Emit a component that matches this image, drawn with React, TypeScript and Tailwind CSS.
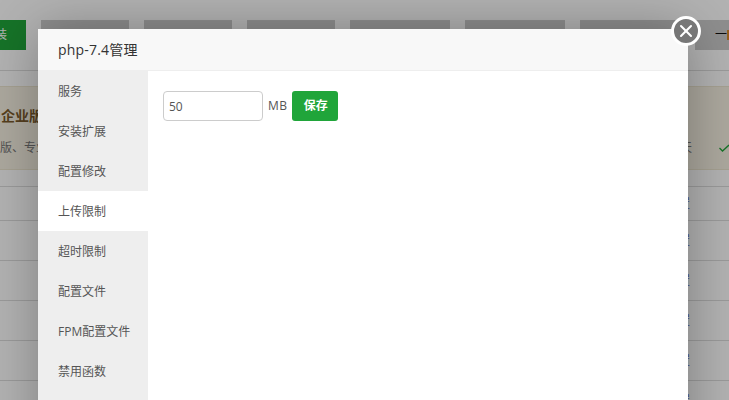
import { X } from "lucide-react";

const font = { fontFamily: '"Open Sans", "Noto Sans CJK SC", sans-serif' };

const topButtons = ["w-[88px]", "w-[88px]", "w-[88px]", "w-[100px]", "w-[100px]", "w-[100px]"];
const menu = ["服务", "安装扩展", "配置修改", "上传限制", "超时限制", "配置文件", "FPM配置文件", "禁用函数"];

function BackgroundPage() {
  return (
    <div className="h-full bg-white text-[#666]">
      <div className="flex h-[71px] border-b border-[#ddd] pt-5">
        <div className="flex h-[30px] w-[26px] shrink-0 justify-end overflow-hidden bg-[#20a53a] pr-[19px] text-xs leading-[30px] text-white">
          <span className="shrink-0">装</span>
        </div>
        <div className="ml-[15px] flex gap-[15px]">
          {topButtons.map((w, i) => (
            <div key={i} className={`${w} h-[30px] bg-[#ccc]`} />
          ))}
        </div>
        <div className="ml-[15px] flex h-[30px] flex-1 items-center bg-[#ccc] pl-5 text-[#111]">
          <span className="text-xs">一</span>
          <span className="h-[10px] w-[2px] bg-[#d98a2b]" />
        </div>
      </div>
      <div className="mt-[15px] flex h-[84px] items-end justify-between border-y border-[#ece5d0] bg-[#f6f1e2] pb-[13px] pl-px">
        <div>
          <div className="mb-[14px] text-sm font-bold text-[#7a5a2c]">企业版</div>
          <div className="-ml-px text-xs text-[#777]">版、专业版</div>
        </div>
        <div className="flex items-center gap-[27px] text-xs text-[#777]">
          <span>天</span>
          <svg width="10" height="8" viewBox="0 0 10 8" fill="none" stroke="#20a53a" strokeWidth="1.3">
            <path d="M0.5 4 L3.5 7 L10 1" />
          </svg>
        </div>
      </div>
      <div className="mt-4 border-t border-[#ddd]">
        {[34, 40, 40, 40, 40, 40].map((h, i) => (
          <div key={i} style={{ height: h }} className="flex items-center justify-end border-b border-[#ddd] pr-[39px] text-xs text-[#5a6bc0]">
            设置
          </div>
        ))}
      </div>
    </div>
  );
}

export default function App() {
  return (
    <div className="relative h-[400px] w-[729px] overflow-hidden" style={font}>
      <BackgroundPage />
      <div className="absolute inset-0 bg-black/30" />
      <div className="absolute left-[38px] top-[29px] flex h-[500px] w-[650px] flex-col bg-white shadow-[1px_1px_50px_rgba(0,0,0,0.3)]">
        <div className="h-[42px] border-b border-[#eee] bg-[#f8f8f8] pl-5 text-sm leading-[41px] tracking-[0.2px] text-[#333]">php-7.4管理</div>
        <div className="flex flex-1">
          <div className="w-[110px] bg-[#eee]">
            {menu.map((m) => (
              <div
                key={m}
                className={`h-10 pl-5 text-xs leading-[42px] text-[#555] ${m === "上传限制" ? "bg-white" : ""}`}
              >
                {m}
              </div>
            ))}
          </div>
          <div className="flex items-center self-start pl-[15px] pt-5">
            <input
              readOnly
              value="50"
              className="h-[30px] w-[100px] rounded-sm border border-[#ccc] px-[5px] text-xs text-[#555] outline-none"
            />
            <span className="ml-[5px] text-xs tracking-[0.4px] text-[#555]">MB</span>
            <button className="ml-[5px] h-[30px] w-[46px] rounded-[3px] bg-[#20a53a] pl-px text-xs font-bold text-white">保存</button>
          </div>
        </div>
      </div>
      <div className="absolute left-[671px] top-[16px] flex h-[30px] w-[30px] items-center justify-center rounded-full border-[3px] border-white bg-[#777]">
        <X size={20} strokeWidth={2.5} className="text-white" />
      </div>
    </div>
  );
}
